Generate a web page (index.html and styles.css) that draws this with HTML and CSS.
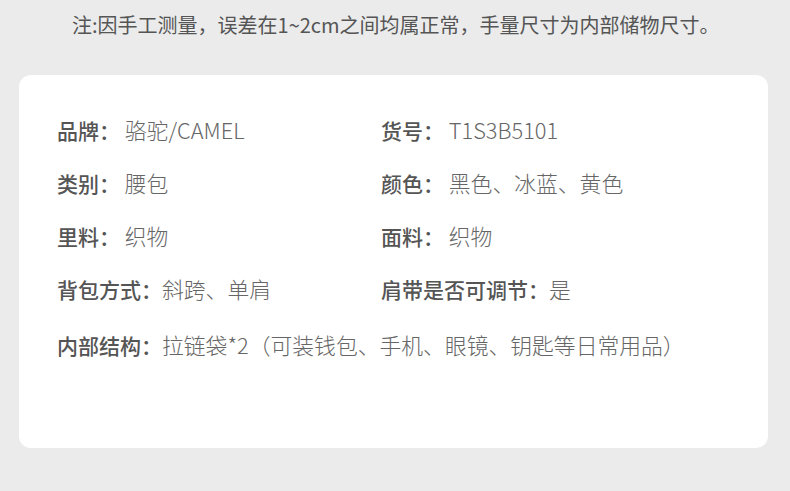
FILE: index.html
```html
<!DOCTYPE html>
<html lang="zh-CN">
<head>
<meta charset="utf-8">
<link rel="stylesheet" href="styles.css">
</head>
<body>
<p class="note">注:因手工测量，误差在1~2cm之间均属正常，手量尺寸为内部储物尺寸。</p>
<section class="card">
  <div class="grid">
    <div class="item"><span class="label">品牌：</span><span class="value"> 骆驼/CAMEL</span></div>
    <div class="item"><span class="label">货号：</span><span class="value"> T1S3B5101</span></div>
    <div class="item"><span class="label">类别：</span><span class="value"> 腰包</span></div>
    <div class="item"><span class="label">颜色：</span><span class="value"> 黑色、冰蓝、黄色</span></div>
    <div class="item"><span class="label">里料：</span><span class="value"> 织物</span></div>
    <div class="item"><span class="label">面料：</span><span class="value"> 织物</span></div>
    <div class="item"><span class="label">背包方式：</span><span class="value">斜跨、单肩</span></div>
    <div class="item"><span class="label">肩带是否可调节：</span><span class="value">是</span></div>
    <div class="item wide"><span class="label">内部结构：</span><span class="value">拉链袋*2（可装钱包、手机、眼镜、钥匙等日常用品）</span></div>
  </div>
</section>
</body>
</html>
```
FILE: styles.css
```css
html, body {
  margin: 0;
  padding: 0;
  background: #ebebeb;
}
body {
  font-family: "Noto Sans CJK SC", "Noto Sans", sans-serif;
  width: 790px;
  height: 491px;
  overflow: hidden;
}
.note {
  margin: 0;
  padding-left: 72px;
  height: 50px;
  line-height: 50px;
  font-size: 20px;
  font-weight: 400;
  color: #555;
  white-space: nowrap;
}
.card {
  margin: 25px 22px 0 19px;
  height: 373px;
  background: #fff;
  border-radius: 12px;
  box-sizing: border-box;
  padding: 28px 0 0 38px;
}
.grid {
  display: grid;
  grid-template-columns: 324px 1fr;
  grid-auto-rows: 53px;
}
.item {
  line-height: 53px;
  font-size: 21px;
  white-space: pre;
}
.item.wide {
  grid-column: 1 / -1;
  margin-top: 3px;
}
.label {
  font-weight: 500;
  color: #555;
}
.value {
  font-size: 21.8px;
  font-weight: 300;
  color: #666;
}
```
